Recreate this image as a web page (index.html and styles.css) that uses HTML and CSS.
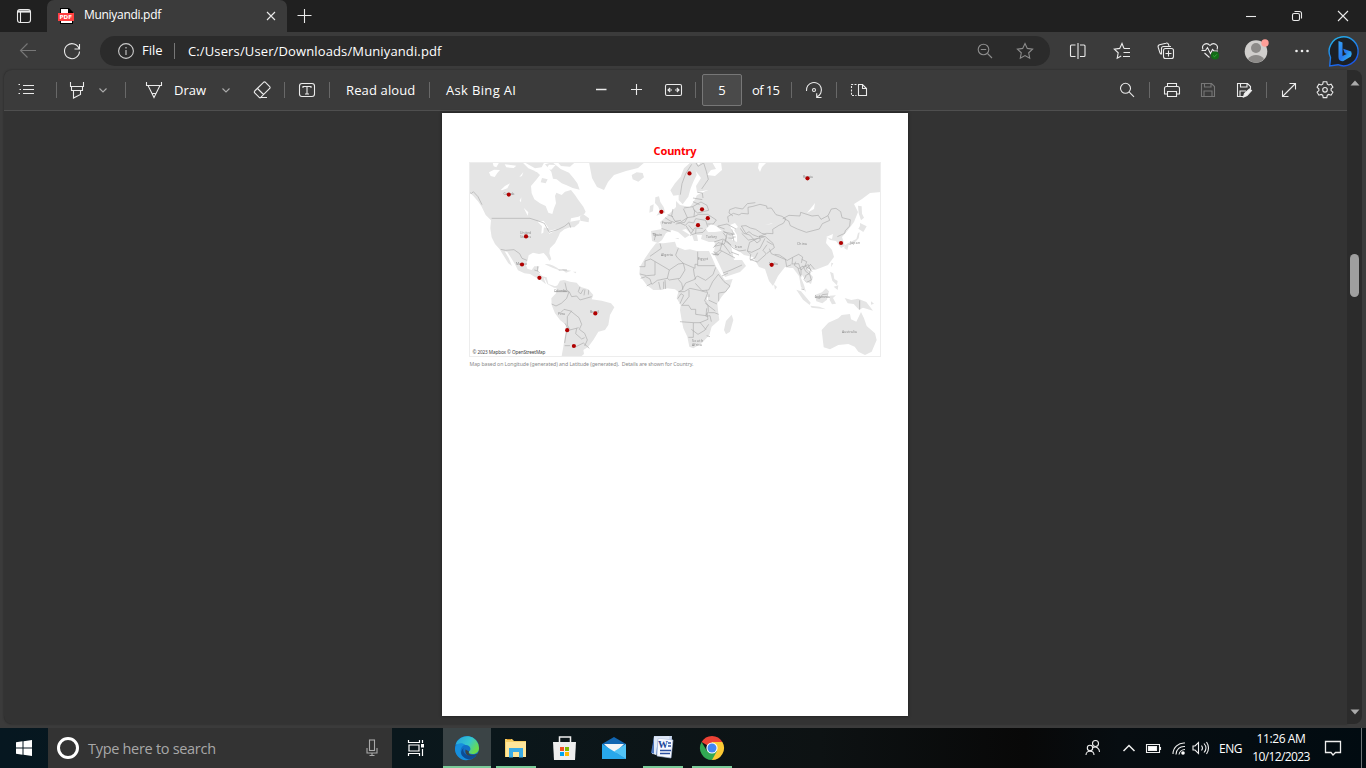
FILE: index.html
```html
<!DOCTYPE html>
<html lang="en">
<head>
<meta charset="utf-8">
<title>Muniyandi.pdf</title>
<link rel="stylesheet" href="styles.css">
</head>
<body>
<div class="browser">
  <header class="titlebar">
    <div class="tab-menu"><svg class="i16" viewBox="0 0 16 16"><rect x="1.5" y="1.5" width="13" height="13" rx="2.5"/><path d="M2 3.500h12" stroke-width="2.200"/><path d="M4.500 4v10"/></svg></div>
    <div class="tab">
      <svg class="pdf" viewBox="0 0 16 16"><path d="M2 0h9l4 4v12H2z" fill="#000"/><path d="M3 1h7v4h4v10H3z" fill="#fff"/><path d="M0 5h16v8H0z" fill="#ff4040"/><text x="1.500" y="11" textLength="12.500" lengthAdjust="spacingAndGlyphs">PDF</text></svg>
      <span class="tab-title">Muniyandi.pdf</span>
      <svg class="tab-close" viewBox="0 0 10 10"><path d="M1 1l8 8M9 1L1 9"/></svg>
    </div>
    <svg class="new-tab" viewBox="0 0 16 16"><path d="M7.500 1v14M.5 7.500h14"/></svg>
    <div class="window-buttons">
      <svg viewBox="0 0 12 12"><path d="M1 6.500h10"/></svg>
      <svg viewBox="0 0 12 12"><rect x="1.500" y="3.500" width="7" height="7" rx="1.500"/><path d="M3.500 1.500h5a2 2 0 0 1 2 2v5"/></svg>
      <svg viewBox="0 0 12 12"><path d="M1 1l10 10M11 1L1 11"/></svg>
    </div>
  </header>

  <nav class="navbar">
    <div class="nav-slot back"><svg class="i18" viewBox="0 0 18 18"><path d="M17 8.500H2M8.500 1.500l-7 7 7 7"/></svg></div>
    <div class="nav-slot reload"><svg class="i18" viewBox="0 0 18 18"><path d="M16.200 7A7.500 7.500 0 1 0 16.500 9.500M16.500 2v5h-5"/></svg></div>
    <div class="omnibox">
      <svg class="i16 info" viewBox="0 0 16 16"><circle cx="8" cy="8" r="7.400"/><path d="M8 7v5M8 4v1.400"/></svg>
      <span class="scheme">File</span>
      <span class="url">C:/Users/User/Downloads/Muniyandi.pdf</span>
      <svg class="i16 zoom-out" viewBox="0 0 16 16"><circle cx="6.500" cy="6.500" r="5.300"/><path d="M3.800 6.500h5.400M10.500 10.500l4.500 4.500"/></svg>
      <svg class="i18 star" viewBox="0 0 18 18"><path d="M9 1.500l2.300 4.900 5.300.7-3.900 3.700 1 5.400L9 13.600l-4.700 2.600 1-5.400L1.400 7.100l5.300-.7z"/></svg>
    </div>
    <div class="actions">
      <div><svg class="i18" viewBox="0 0 18 18"><path d="M6.500 3H2.500a1 1 0 0 0-1 1v9.500a1 1 0 0 0 1 1h4M11 3h4a1 1 0 0 1 1 1v9.500a1 1 0 0 1-1 1h-4M9 1v16"/></svg></div>
      <div><svg class="i18" viewBox="0 0 18 18"><path d="M11 6.500L9 1.500 6.700 6.400l-5.400.7 3.900 3.700-1 5.500 4-2.200M11 6.500h6M10.500 10.500H17M10 14.500h7"/></svg></div>
      <div><svg class="i18" viewBox="0 0 18 18"><rect x="6.500" y="6.500" width="10" height="10" rx="2"/><path d="M11.500 8.500v6M8.500 11.500h6M4.500 12.500L3 11 1.200 5.300a2 2 0 0 1 1.300-2.500L9 1.200a2 2 0 0 1 2.500 1.300l.5 1.500M4.500 12V6.500a2 2 0 0 1 2-2H14"/></svg></div>
      <div><svg class="i18" viewBox="0 0 18 18"><path d="M2 7.500C0 3 5.500-.5 9 3.500c3.500-4 9-.5 7 4M.5 8.500h4l2-3 3 6 2-4 1.500 1.500h4M3.500 11l5 4.500"/><circle cx="14" cy="13.500" r="4" fill="#126b16" stroke="none"/><path d="M12.200 13.600l1.300 1.200 2.300-2.400" stroke="#46b34b" stroke-width=".8"/></svg></div>
      <div><svg class="i24" viewBox="0 0 24 24"><circle cx="12" cy="12.500" r="11.300" fill="#d0cecc" stroke="none"/><circle cx="12" cy="9" r="5" fill="#8c8a88" stroke="none"/><path d="M3.800 20.200Q7 16 12 16t8.200 4.200Q12 27.500 3.800 20.200" fill="#8c8a88" stroke="none"/><circle cx="21" cy="4" r="3.700" fill="#ff9f98" stroke="none"/></svg></div>
      <div><svg class="i18" viewBox="0 0 18 18"><g fill="#eee" stroke="none"><circle cx="3.500" cy="9" r="1.300"/><circle cx="9" cy="9" r="1.300"/><circle cx="14.500" cy="9" r="1.300"/></g></svg></div>
      <div><svg class="bing" viewBox="0 0 32 32"><defs><linearGradient id="ring" x2=".5" y2="1"><stop stop-color="#26b8e8"/><stop offset="1" stop-color="#1958e8"/></linearGradient><linearGradient id="bee" y2="1"><stop stop-color="#35a5f5"/><stop offset=".5" stop-color="#2675ef"/><stop offset="1" stop-color="#38c9ee"/></linearGradient></defs><path d="M1.700 31l.8-8.500A14.500 14.500 0 1 1 10 29.700z" fill="#1b2026" stroke="url(#ring)" stroke-width="1.400"/><path d="M10.500 6l4 1.600v13.500l4.200-2.200-2-1-1.500-4.200 8 2.700q1.300 3-.3 5l-7.900 4.900q-4.500 0-4.500-4.300z" fill="url(#bee)" stroke="none"/></svg></div>
    </div>
  </nav>

  <main class="viewer">
    <section class="pdf-pane">
      <div class="toolbar">
        <svg viewBox="0 0 20 20"><path d="M7 5.500h11M7 9.500h11M7 13.500h11M2.500 4.500H4M3.500 9.500H5M2.500 13.500H4"/></svg>
        <i></i>
        <svg viewBox="0 0 20 20"><path d="M3.500 2v4.500h13V2M4.500 6.500v4h11v-4M6.500 11v7l7-3.500V11"/></svg>
        <svg class="chev" viewBox="0 0 10 10"><path d="M1.500 3.500L5 7l3.500-3.500"/></svg>
        <i></i>
        <svg viewBox="0 0 20 20"><path d="M2.500 2v3.500h15V2M4 5.500L10 17.500l6-12M8 13.500h4"/></svg>
        <span class="t-draw">Draw</span>
        <svg class="chev" viewBox="0 0 10 10"><path d="M1.500 3.500L5 7l3.500-3.500"/></svg>
        <svg viewBox="0 0 20 20"><path d="M2.700 11L11.500 2.300q1-.8 2 0L17.700 6.500q.8 1 0 2L9 17.200q-1 .8-2 0L2.700 13q-.8-1 0-2zM5.500 8.500l6 6M8 17.500h7"/></svg>
        <i></i>
        <svg viewBox="0 0 20 20"><rect x="2.500" y="3.500" width="15" height="13" rx="2.500"/><path d="M6 8V6.500h8V8M10 6.500V14M8 14h4"/></svg>
        <i></i>
        <span class="t-read">Read aloud</span>
        <i></i>
        <span class="t-ask">Ask Bing AI</span>
        <svg viewBox="0 0 20 20"><path d="M5 9.500h10.500" stroke-width="1.500"/></svg>
        <svg viewBox="0 0 20 20"><path d="M5 9.500h11M10.500 4v11"/></svg>
        <svg viewBox="0 0 20 20"><rect x="2.500" y="4.500" width="16" height="11" rx="1.500"/><path d="M9 10H5.500M12 10h3.500M7.200 8L5 10l2.200 2M13.800 8l2.200 2-2.200 2"/></svg>
        <i></i>
        <b class="page-box">5</b>
        <span class="t-of">of 15</span>
        <i></i>
        <svg viewBox="0 0 20 20"><path d="M2.500 11A7.500 7.500 0 1 1 13 16.800M17.500 17.500h-4.800v-4.300"/><circle cx="10" cy="10" r="1.500"/></svg>
        <i></i>
        <svg viewBox="0 0 20 20"><path d="M9.500 4.500h4l4 4v7h-8zM13.500 4.500v4h4"/><path d="M7.500 4.500h-5v11h5" stroke-dasharray="2 1.300"/></svg>
        <svg viewBox="0 0 20 20"><circle cx="8.500" cy="8.300" r="5"/><path d="M12.300 12.200l4.700 4.600"/></svg>
        <i></i>
        <svg viewBox="0 0 20 20"><path d="M5.500 6.500v-3h9v3M5.500 14h-3V8.500q0-2 2-2h11q2 0 2 2V14h-3M5.500 11.500h9v5h-9z"/></svg>
        <svg class="dim" viewBox="0 0 20 20"><path d="M3.500 3.500h10l3 3v10h-13zM6.500 3.500V7h6.500V3.500M6 16.500V11h8v5.500"/></svg>
        <svg viewBox="0 0 20 20"><path d="M9 16.500H3.500v-13h10l3 3V9M6.500 3.500V7H13V3.500M6 16.500V11h6"/><path d="M9.500 17l1-3.500 5-4.500 2 1.500-4.500 5z" fill="#f1f1f1"/></svg>
        <i></i>
        <svg viewBox="0 0 20 20"><path d="M3.500 16.500l13-13M10.500 3.500h6v6M3.500 10.500v6h6"/></svg>
        <svg viewBox="0 0 20 20"><path d="M8.200 1.800h3.600l.5 2.400 1.500.8 2.300-.8 1.800 3-1.800 1.600v1.800l1.800 1.600-1.800 3-2.300-.8-1.500.8-.5 2.400H8.200l-.5-2.400-1.500-.8-2.300.8-1.800-3 1.800-1.600V9L2.100 7.200l1.800-3 2.300.8 1.500-.8z"/><circle cx="10" cy="9.800" r="2.300"/></svg>
      </div>

      <div class="canvas">
        <article class="sheet">
          <h1>Country</h1>
          <svg class="map" viewBox="469 162 412 195">
            <defs><filter id="soften" x="0" y="0" width="1" height="1"><feGaussianBlur stdDeviation=".3"/></filter></defs>
            <g filter="url(#soften)">
            <g class="land">
              <g transform="translate(465 140) scale(.33333)">
                <path d="M12 67H172L190 85 215 95 225 105 215 118 198 138 200 160 208 178 225 190 242 198 250 218 262 222 267 205 273 190 270 168 274 158 290 165 300 155 318 150 330 165 340 180 355 200 362 215 358 222 340 230 318 235 316 245 345 240 342 250 328 262 315 262 298 268 285 278 280 290 270 310 255 325 253 340 259 358 253 362 246 350 236 339 222 342 204 338 191 346 188 360 183 375 187 386 200 390 208 379 223 379 217 395 207 402 195 402 178 400 159 391 150 373 139 355 127 336 119 334 131 354 141 378 130 370 115 346 104 328 90 312 80 292 76 265 78 241 62 225 50 200 40 185 25 168 12 155z"/>
                <path d="M240 73L262 67 287 87 312 98 326 115 337 130 344 149 323 144 305 136 290 130 275 118 264 116 259 95z"/><path d="M178 67h60l-8 15-20 3zM278 67h52l-15 13-27-2zM231 114l17 4-6 12-15-3zM345 230l8-9 19 14-1 12-25-5zM194 401l24-5 17 15 8 22-15-12-18-10zM239 373q20-5 48 19-26-8-48-19M290 387l29 5-16 6zM324 395h10l-2 5z"/>
              </g>
              <path d="M589 162H645L638 168 626 171 614 175 608 182 604 190 597 187 592 178z"/>
              <g transform="translate(540 250) scale(.33333)"><path d="M60 92L72 90 90 95 110 98 120 110 145 118 160 135 155 148 185 152 213 160 223 172 210 195 205 225 195 240 175 245 160 270 145 290 130 300 132 312 125 318H65L70 290 76 250 78 225 60 210 45 190 35 165 34 145 48 130 50 110zM0 77l20 5 5 20 20 7 14-5v10l-17-1-20-11-8-17-14-4z"/></g>
              <g transform="translate(630 235) scale(.33333)"><path d="M78 25L100 25 135 20 140 35 165 45 180 43 200 48 237 48 247 70 259 97 272 118 285 136 308 132 300 155 275 185 262 205 265 235 268 255 245 275 238 300 215 325 190 340 178 335 172 305 160 280 155 255 150 225 152 210 140 190 145 170 135 163 110 160 95 165 70 165 50 150 35 130 28 118 30 95 45 70 62 45zM305 239L310 255 300 290 288 298 282 285 288 258z"/></g>
              <g transform="translate(600 140) scale(.33333)"><path d="M95 105L110 97 128 99 132 112 115 125 98 118zM272 67H292L286 85 290 105 280 125 272 145 265 170 248 193 236 180 236 165 220 167 211 151 225 130 242 110 252 85zM166 172l11-3 4 17 10 15 5 17-27 9 10-15-4-12-10-11zM150 198l11-5-2 21-11 4zM225 294h12l-2 4z"/></g>
              <path d="M694 162H881V192L870 193 862 199 854 204 858 212 854 222 848 230 842 237 845 246 841 248 836 241 830 240 827 237 826 243 832 250 834 257 828 265 815 270 806 269 813 277 811 284 807 282 802 275 801 278 804 285 806 292 801 287 799 276 793 268 790 268 785 267 778 276 773 286 769 281 765 269 759 267 753 257 744 255 731 245 734 260 742 260 746 266 740 272 725 277 719 264 714 254 715 242 709 242 701 239 702 235 697 235 698 241 694 241 692 235 686 229 682 230 690 235 685 238 678 232 672 230 666 233 662 240 658 243 652 241 651 231 662 229 660 222 667 216 676 207 676 201 680 205 690 207 694 201 697 195 708 190 697 192 696 186 701 178 695 170z"/>
              <g transform="translate(720 155) scale(.33333)"><path d="M414 152l11 2 1 22 6 12-9 8-7-21zM420 204l20 10-10 17-15-10 5-8zM419 232l-3 18-16 17-24 5 5-6 28-14 5-18zM374 269l12 1-4 15-9-5zM334 323l6 2-7 12z"/></g>
              <g transform="translate(750 240) scale(.33333)">
                <path d="M215 270L235 248 265 235 275 225 300 222 303 238 319 245 333 216 342 235 350 258 375 280 380 300 365 335 345 345 325 335 314 320 295 312 265 315 240 328 221 322zM72 133l9 8-6 8zM139 149l14 5 29 34-3 7-20-16zM181 197l27 3 20 8-43-5zM195 165l21-8 12-12 9 9-6 25-14 11-18-6zM240 167l18-1-9 8 9 17-12 2-7-13zM240 95l10 5 3 17 10 6-2 13-14-14zM251 140l14-4-2 14zM284 174l20 6 20-4 25 10 20 26-30-9-12 6-16-17-18-2zM232 208l11-1M250 210l14-3zM363 184l9 7-9 3z"/>
              </g>
            </g>
            <g class="water">
              <path d="M706 229L711 224 716 226 722 231 715 232 708 232zM730 225L735 223 738 227 734 230 737 235 737 242 732 240 732 232zM712 162h9l1 8-7 6-8-1 4-5 5-1zM759 162h8l-5 5-2 5-2-4zM807 213l8-10-1 6zM765 225l8-2-2 1z"/>
              <g transform="translate(465 140) scale(.33333)"><path d="M72 97l15-8 18 1-8 9-8 12-12-3zM83 68h19l-8 14-8-3zM119 73l35 4-8 7-22-2zM107 150l13-12 15-8-8 15-16 6zM176 203l14 14-2 10zM218 245l18-2 15 22-17-3zM231 257l6 1-2 20-6 3zM248 274l28-7-8 7-15 7zM164 182l5-10-1 15zM243 87l9-13 20 1-13 14zM163 111l12-15-4 12zM208 93l25-5-15 9z"/></g>
              <path d="M707 297h3v3h-3zM697 163l3 0-1 2zM826 237l7-3-1 5z"/>
            </g>
            <g class="borders">
              <g transform="translate(465 140) scale(.33333)"><path d="M80 235H195L220 243 238 250 249 270 252 277 280 268 298 259 312 248 317 263M12 158l8 2 5-5 14 15 12 24M107 328l15 3 25-2 17 12 7 14 15 6M208 390l10 3 6 6M218 379v15M281 390h25"/></g>
              <g transform="translate(540 250) scale(.33333)"><path d="M75 98L80 120 88 126 95 140 110 138 120 150 155 140M43 125H85M120 110L115 125 122 132 130 118M135 118l-3 18M146 120l-1 14M35 162l13 6 16-8 16-15 7-20M60 190l12-12 20 5 25 20 8 20-7 15 16 12 8 20-8 18M95 182L82 200 82 225 90 240 116 233M75 220l8 14-5 20-4 25M74 287H90M108 290L130 279 148 295M110 235l-3 16 18 16 9-4"/></g>
              <g transform="translate(630 235) scale(.33333)"><path d="M90 25L94 40 60 64M28 95H45V78L62 72 118 105 145 87 160 85 195 100M145 40L137 60 142 68 160 85M203 50V92H254M195 100V88H203M118 105L112 130 118 135 150 130 165 105 160 85M75 80V120L50 122 30 117M32 130L47 125 60 132 65 148M65 145l-15 8M66 148l16-12 30-6M86 141l5 22M101 140v22M105 135l2 27M145 133l10 12 4 18-12 7M190 100l3 20 4 12-30 12-10 18M193 132l9-9 25 13 22-17 8-22M196 145l20 22 20-2 12-25 17-22 17 22 18 13-14 18-20 3v25M145 170h18l17-10 28 6 22 6M143 191l10-15 8 5-11 25M177 165v20l-20 25M154 211h22l7 12h14v15l31 4 7-13-1-18-10-14 9-23-4-8M150 260l40 3h20l24-10-3-18M190 263v44H175M184 283l20 15 20-12 12-18M210 262l18 22M235 233h18l13 5M226 205l30 23M237 178v18l24 11M230 220l-2 24 12-2 4 18M230 302l10 3"/></g>
              <g transform="translate(600 140) scale(.33333)"><path d="M275 73l-18 28-11 30-5 33M287 67l7 12 17-10 8 25 6 24-20 29M292 157l15 2 2 15M279 174l28 5M279 185l20 9M252 204l26-4 25-14 18 10 5 15-33 8-13-10M219 207l-4 20 10 17 18-3M225 244l15 4 22-15-12-27M278 200l6 12-2 18-20 3M282 230l14-7 27 0 26 17-9 12-18 0M262 233l-8 14-27 5M195 233l16 10 14 5M203 224l16 6M184 265l28 10M157 281h10l-4 20M242 250l14 6 10-10 15 3 6-13 30 5 6 19M258 257l15 24 11-17 24 1M285 280l24-3 8-9M266 256l14 16M270 286l17-6 1-14M352 259l22 8M369 278l11 14-7 20-30 7M385 294l14 1-2-14-25-5M340 323l14-15 15 3 17 23 5 8M340 335l17 9-18 0M335 341l18 4 12-12M399 228l-12-9 2-10 17-6 22 4 14-16 24-3M397 282l5-4M400 283l-5-15M402 304l-3-13 8 0"/></g>
              <g transform="translate(720 155) scale(.33333)"><path d="M26 202L23 185 40 175 57 180 65 175 85 177 84 157 99 154 120 148 140 153 141 160 154 159 168 179 186 184 198 192 190 205 177 211 158 223 159 236 140 235 116 246 98 239 87 230 78 236 64 213 78 212 91 219 107 223 125 235 139 238M188 191L207 181 240 183 242 172 276 183 295 181 303 193 324 182M324 182l10-20 14-2 14 10 4 18 25 6-2 19-13 14-2 8-22 10M324 182l5 14-22 10-9 16-39 10-27-10-21-10-5-14-16-8M61 220l10 15 18 5 22 24 10-8-3-13 15 3M65 235l20 20 33-5 17-6 9 8 15 13 4 13-22 17M82 288l7-26 24-12M82 288l13 4 25-12 15-30M82 288l10 10-2 15 22 8 27-24-10-11 12-17M140 259l18 10M148 281l6 15 24 10 24 10 18-10 16-8 12 8-4 18M164 298l14 2 17 11M196 311l4 24 14-6M218 308l-2 19 20-1 7 19 12-10 5-15-15-7M243 340v20M255 333l17 10-4 13-12 6M270 327l13 15"/></g>
              <g transform="translate(750 240) scale(.33333)"><path d="M144 85l8 24M157 81l18-7 4 11 7 10M160 80l7 14 12 9 5 17-14 7-8-9 6-10M137 65l-4 11 14 10 12-8M181 74l-13 12 14 13M329 181v28M194 171l15 5 8-12 17-2M154 147l8 2M23 38l-8 16-14 7"/></g>
              <path d="M714 242l9-3 5 3 5 6 6 3 7-1M723 240l-3 10-5 4M720 250l15 8M728 273l-6 3M723 273l8-3 11-5M731 252l8 3M736 229l-9-5-9 2M723 231l7 4 5-1M727 234l-2 7 6 4"/>
            </g>
            <g class="labels">
              <text x="503.500" y="194.500" textLength="11">Canada</text><text x="520" y="234" textLength="11">United</text><text x="520" y="238" textLength="11">States</text><text x="516" y="264.500" textLength="11">Mexico</text><text x="554" y="292" textLength="13">Colombia</text><text x="558" y="315" textLength="7">Peru</text><text x="590" y="313" textLength="9">Brazil</text><text x="661" y="256" textLength="12">Algeria</text><text x="698" y="260" textLength="10">Egypt</text><text x="692" y="342" textLength="11">South</text><text x="692" y="346" textLength="10">Africa</text><text x="706" y="238" textLength="11">Turkey</text><text x="735" y="248" textLength="7">Iran</text><text x="803" y="178" textLength="10">Russia</text><text x="797" y="245" textLength="10">China</text><text x="850" y="244" textLength="10">Japan</text><text x="815" y="298" textLength="15">Indonesia</text><text x="842" y="333" textLength="15">Australia</text><text x="662" y="224" textLength="10">France</text><text x="653" y="236" textLength="9">Spain</text><text x="769" y="265" textLength="9">India</text>
            </g>
            </g>
            <g class="dots"><circle cx="508.800" cy="194.600" r="2.100"/><circle cx="526" cy="236.400" r="2.100"/><circle cx="522" cy="264.500" r="2.100"/><circle cx="539.400" cy="277.800" r="2.100"/><circle cx="595.300" cy="313.400" r="2.100"/><circle cx="567.200" cy="330.200" r="2.100"/><circle cx="573.900" cy="346" r="2.100"/><circle cx="689.500" cy="173.400" r="2.100"/><circle cx="661.400" cy="211.800" r="2.100"/><circle cx="702" cy="209.300" r="2.100"/><circle cx="707.800" cy="218.200" r="2.100"/><circle cx="698" cy="225.200" r="2.100"/><circle cx="807.500" cy="178.300" r="2.100"/><circle cx="841" cy="243" r="2.100"/><circle cx="771.700" cy="264.800" r="2.100"/></g>
            <rect class="frame" x="469.500" y="162.500" width="411" height="194"/>
            <text class="credit" x="472.500" y="354" textLength="73">© 2023 Mapbox © OpenStreetMap</text>
            </svg>
          <svg class="caption" viewBox="0 0 412 10"><text x="0.500" y="7.500" textLength="224" xml:space="preserve">Map based on Longitude (generated) and Latitude (generated).  Details are shown for Country.</text></svg>
        </article>
      </div>
    </section>
    <aside class="scrollbar">
      <svg class="arrow" viewBox="0 0 10 6"><path d="M0.500 5.500L5 .5l4.500 5z"/></svg>
      <div class="track"><div class="thumb"></div></div>
      <svg class="arrow" viewBox="0 0 10 6"><path d="M.5.5h9L5 5.500z"/></svg>
    </aside>
  </main>

  <footer class="taskbar">
    <div class="start"><svg class="i16" viewBox="0 0 16 16"><path d="M0 2.200l6.500-.9v6.200H0zM7.500 1.200L16 0v7.500H7.500zM0 8.500h6.500v6.200L0 13.800zM7.500 8.500H16V16l-8.500-1.200z" fill="#fff" stroke="none"/></svg></div>
    <div class="search">
      <span class="cortana"></span><span class="search-text">Type here to search</span>
      <svg class="mic" viewBox="0 0 12 18"><rect x="3.500" y="1" width="5" height="10.500"/><path d="M1 9v5h10V9M6 14v2.500M3.500 16.500h5"/></svg>
    </div>
    <div class="start"><svg class="i18" viewBox="0 0 18 18"><path d="M1.500 1v2.500h11V1M1.500 17v-2.500h11V17M2 6h10v6H2zM15.500 1v3M15.500 10v7" stroke-width="1.200"/><path d="M14 5h3v3.500h-3z" fill="#fff" stroke="none"/></svg></div>
    <div class="apps">
      <div class="app active"><svg class="i24" viewBox="0 0 24 24"><defs><linearGradient id="edgeTop" x2="1" y2=".5"><stop stop-color="#239fdf"/><stop offset=".6" stop-color="#35c7ce"/><stop offset="1" stop-color="#69dc4c"/></linearGradient></defs><circle cx="12" cy="12" r="12" fill="#1171c8"/><path d="M.6 8.500A12 12 0 0 1 24 12c0 4-3 6-6.500 6-3 0-4-1-3.500-2.500 3-2 1-6.500-3-6.500C6.500 9 1.700 8.500.6 8.500z" fill="url(#edgeTop)"/><path d="M0 12c1-5 7-6 10.500-3C6 9 3.500 16 8 20.500c3 3 6 3.500 7 3C7 26.500-.5 20 0 12z" fill="#168fdd"/><path d="M14 15.500c-1 1.500.5 3.300 3.500 3.300 2 0 4-.7 5.500-1.300l1 6h-6l4-4c-6 3-13 0-11.500-6z" fill="#3b4446"/><path d="M8.500 12C7 17 12 22 22 18.500c-4 6-10 6-14 2-3-3-2-6 .5-8.500z" fill="#0d4d94"/></svg></div>
      <div class="app running"><svg class="i24" viewBox="0 0 24 24"><path d="M1 3h7l2 2h12v16H1z" fill="#f6cf67"/><path d="M2 6h20v15H2z" fill="#ffe69a"/><path d="M3 3h4v1H3z" fill="#d89625"/><path d="M5 12h14v9.500h-4V16H9v5.500H5z" fill="#3aabe5"/></svg></div>
      <div class="app"><svg class="i24" viewBox="0 0 24 24"><path d="M6.500 7V1h11v6" fill="none" stroke="#eee" stroke-width="1.500"/><path d="M0 6h23l-1 18H1z" fill="#eee"/><path d="M7 11h4v4H7z" fill="#f25022"/><path d="M12 11h4v4h-4z" fill="#7fba00"/><path d="M7 16h4v4H7z" fill="#00a4ef"/><path d="M12 16h4v4h-4z" fill="#ffb900"/></svg></div>
      <div class="app"><svg class="i24" viewBox="0 0 24 24"><path d="M0 8L12 1l12 7v15H0z" fill="#1266b1"/><path d="M2 8h20L12 18z" fill="#f4f5f6"/><path d="M0 8l13 8L24 23H0z" fill="#28a8ec"/><path d="M24 8L12 15.500 24 23z" fill="#52c3f5"/></svg></div>
      <div class="app running"><svg class="i24" viewBox="0 0 24 24"><path d="M3 0h18l-1 20-19-2z" fill="#c9d8ef"/><path d="M3 1h6L6 18l-6-1z" fill="#4b74ba"/><path d="M7 2l15 2-2 18-14-2z" fill="#f8faff" stroke="#a9bce0" stroke-width=".6"/><path d="M3 1l15-1v3L7 2 5 19l-2-1" fill="#dfe8f6"/><text class="word-w" x="7" y="12" textLength="9">W</text><path d="M17 7h3M17 10h3M9 14.500h11M9 17.500h10" stroke="#2c50a0" stroke-width="1.700"/></svg></div>
      <div class="app running"><svg class="i24" viewBox="0 0 24 24"><path d="M12 12L1.600 6A12 12 0 0 1 22.400 6z" fill="#ec4235"/><path d="M12 12L12 24A12 12 0 0 0 22.400 6H12z" fill="#fcc934"/><path d="M12 24l5-9-5-1-5 1-5.400-9A12 12 0 0 0 12 24" fill="#32a853"/><circle cx="12" cy="12" r="5.600" fill="#fff"/><circle cx="12" cy="12" r="4.500" fill="#4285f4"/></svg></div>
    </div>
    <div class="tray">
      <svg viewBox="0 0 18 18"><circle cx="11.500" cy="4.500" r="3"/><circle cx="6" cy="9" r="2.700"/><path d="M2 16c0-5 8-5 8 0M9 8.500c3-1.500 6.500.5 6.500 4.500"/></svg>
      <svg viewBox="0 0 18 18"><path d="M3.500 12L9 6.500l5.500 5.500" stroke-width="1.500"/></svg>
      <svg viewBox="0 0 18 18"><path d="M2.500 5.500h13v8h-13zM16.500 8v3"/><path d="M4.500 7.500h8v4h-8z" fill="#fff"/></svg>
      <svg viewBox="0 0 18 18"><path d="M3 15A11 11 0 0 1 15 4M6 15.500A8 8 0 0 1 15 7.500M9 15.500A6 6 0 0 1 15 10.500"/><circle cx="13" cy="14" r="1.800" fill="#fff" stroke="none"/></svg>
      <svg viewBox="0 0 18 18"><path d="M2 7h2l3.500-3.500v11L4 11H2zM10.500 6.500q2 2.500 0 5M13 4.500q4 4.500 0 9M15.500 3q4 6 0 12"/></svg>
      <span class="lang">ENG</span>
      <div class="clock"><span class="time">11:26 AM</span><span class="date">10/12/2023</span></div>
      <svg viewBox="0 0 18 18"><path d="M1.500 2.500h15v11h-5L9 16l-2-2.500H1.500z" stroke-width="1.300"/></svg>
      <span class="peek"></span>
    </div>
  </footer>
</div>
</body>
</html>
```
FILE: styles.css
```css
* { box-sizing: border-box; }
body { margin: 0; background: #3b3b3b; font-family: "Open Sans", "Noto Sans", sans-serif; color: #fff; overflow: hidden; }
svg { display: block; flex: none; fill: none; stroke: #eaeaea; stroke-width: 1.1; overflow: visible; }
.browser { width: 1366px; height: 768px; display: grid; grid-template-rows: 32px 38px 658px 40px; }
.i16 { width: 16px; height: 16px; }
.i18 { width: 18px; height: 18px; }
.i24 { width: 24px; height: 24px; }

.titlebar { display: flex; align-items: center; background: #202020; }
.tab-menu { width: 47px; padding-left: 16px; }
.tab { width: 240px; height: 32px; border-radius: 7px 7px 0 0; background: #3b3b3b; display: flex; align-items: center; padding: 0 11px; }
.pdf { width: 16px; height: 16px; stroke: none; }
.pdf text { font: bold 5.500px "DejaVu Sans", sans-serif; fill: #fff; }
.tab-title { margin-left: 10px; flex: 1; font-size: 12px; line-height: 16px; margin-top: -2px; letter-spacing: -.3px; }
.tab-close { width: 10px; height: 10px; }
.new-tab { width: 16px; height: 16px; margin-left: 10px; }
.window-buttons { margin-left: auto; display: flex; gap: 34px; padding-right: 17px; }
.window-buttons svg { width: 12px; height: 12px; }

.navbar { display: flex; align-items: center; }
.nav-slot { display: flex; justify-content: center; }
.back { width: 56px; }
.back svg { stroke: #777; }
.reload { width: 32px; }
.omnibox { margin-left: 12px; width: 950px; height: 30px; border-radius: 15px; background: #2b2b2b; display: flex; align-items: center; padding: 0 16px 0 18px; font-size: 13px; }
.scheme { margin-left: 8px; width: 33px; height: 16px; line-height: 14px; border-right: 1px solid #777; letter-spacing: 0; }
.url { margin-left: 13px; flex: 1; letter-spacing: .13px; }
.info { stroke: #ccc; }
.zoom-out { stroke: #8c8c8c; margin-right: 23px; }
.star { stroke: #8c8c8c; }
.actions { margin-left: 5px; display: grid; grid-template-columns: 45px 44px 44px 44px 48px 44px 40px; align-items: center; justify-items: center; }
.bing { width: 32px; height: 32px; }

.viewer { display: flex; padding: 0 4px 4px; }
.pdf-pane { width: 1343px; background: #333; border-radius: 8px 0 0 8px; overflow: hidden; box-shadow: 0 0 2px #222; }
.toolbar { height: 41px; background: #3b3b3b; border-bottom: 1px solid #4f4f4f; padding-left: 12px; display: grid; align-items: center; font-size: 13px; white-space: nowrap;
  grid-template-columns: 40px 11px 31px 27px 19px 30px 47px 31px 32px 13px 32px 17px 83px 17px 145px 35px 37px 32px 7px 50px 39px 13px 32px 13px 268px 32px 13px 36px 36px 32px 13px 36px 28px; }
.toolbar svg { width: 20px; height: 20px; }
.toolbar .chev { width: 10px; height: 10px; stroke: #aaa; }
.toolbar .dim { stroke: #777; }
.toolbar i { width: 1px; height: 16px; background: #686868; }
.t-draw { letter-spacing: 0; }
.t-read { letter-spacing: .13px; }
.t-ask { letter-spacing: .34px; }
.t-of { letter-spacing: -.6px; }
.page-box { width: 40px; height: 32px; border: 1px solid #777; border-radius: 2px; background: #4a4a4a; font-weight: 400; text-align: center; line-height: 30px; }

.canvas { display: flex; justify-content: center; padding: 2px 0 0; }
.sheet { width: 466px; height: 603px; background: #fff; padding: 30px 27px 0; box-shadow: 0 0 3px #1c1c1c; margin-right: 1px; }
h1 { margin: 0; height: 19px; text-align: center; color: #f00; font: bold 11px/16px "Noto Sans", sans-serif; letter-spacing: -.2px; }
.map { width: 412px; height: 195px; overflow: hidden; stroke: none; }
.land { fill: #e5e5e5; }
.water { fill: #fff; }
.borders { fill: none; stroke: #a6a6a6; stroke-width: .6px; }
.borders g { stroke-width: 1.8px; }
.labels { font: 3.400px "Noto Sans", sans-serif; fill: #8a8a8a; }
.dots { fill: #b00000; }
.frame { fill: none; stroke: #ededed; stroke-width: 1px; }
.credit { font: 4.700px "Noto Sans", sans-serif; fill: #444; }
.caption { width: 412px; height: 10px; margin-top: 1px; stroke: none; }
.caption text { font: 5.200px "Noto Sans", sans-serif; fill: #8a8a8a; }

.scrollbar { width: 15px; display: flex; flex-direction: column; align-items: center; background: #2b2b2b; border-radius: 0 8px 8px 0; padding: 10px 0 9px; }
.arrow { width: 10px; height: 6px; fill: #aaa; stroke: none; }
.track { flex: 1; padding-top: 168px; }
.thumb { width: 9px; height: 43px; border-radius: 4.500px; background: #9f9f9f; }

.taskbar { display: flex; background: linear-gradient(90deg, #061720, #0b171b 36%, #0d1213 60%, #080808 75%, #070d11 82%, #010b11); }
.start { width: 48px; display: grid; place-items: center; }
.start svg { stroke: #fff; }
.search { width: 344px; background: #333; display: flex; align-items: center; padding: 0 14px 0 9px; color: #a8a8a8; font-size: 14.500px; }
.cortana { width: 22px; height: 22px; border: 3px solid #fff; border-radius: 50%; }
.search-text { margin-left: 9px; flex: 1; letter-spacing: -.3px; }
.mic { width: 12px; height: 18px; stroke: #aaa; }
.apps { margin-left: 3px; display: flex; gap: 1px; }
.app { width: 48px; display: grid; place-items: center; }
.app svg { stroke: none; }
.running { background: linear-gradient(#7acb99, #7acb99) 50% 100% / 40px 2px no-repeat; }
.active { background: linear-gradient(#7acb99, #7acb99) 0 100% / 48px 2px no-repeat, #3b4446; }
.word-w { font: bold 10px "Liberation Serif", serif; fill: #1f479a; }
.tray { margin-left: 348px; display: grid; align-items: center; grid-template-columns: 36px 24px 26px 21px 28px 33px 72px 37px 1px; font-size: 12px; }
.tray svg { width: 18px; height: 18px; stroke: #eee; }
.lang { letter-spacing: -.5px; }
.clock { width: 58px; display: grid; text-align: center; line-height: 18px; white-space: nowrap; }
.time { letter-spacing: -.4px; }
.date { letter-spacing: -.6px; }
.peek { width: 1px; height: 40px; background: #6d7376; }
```
